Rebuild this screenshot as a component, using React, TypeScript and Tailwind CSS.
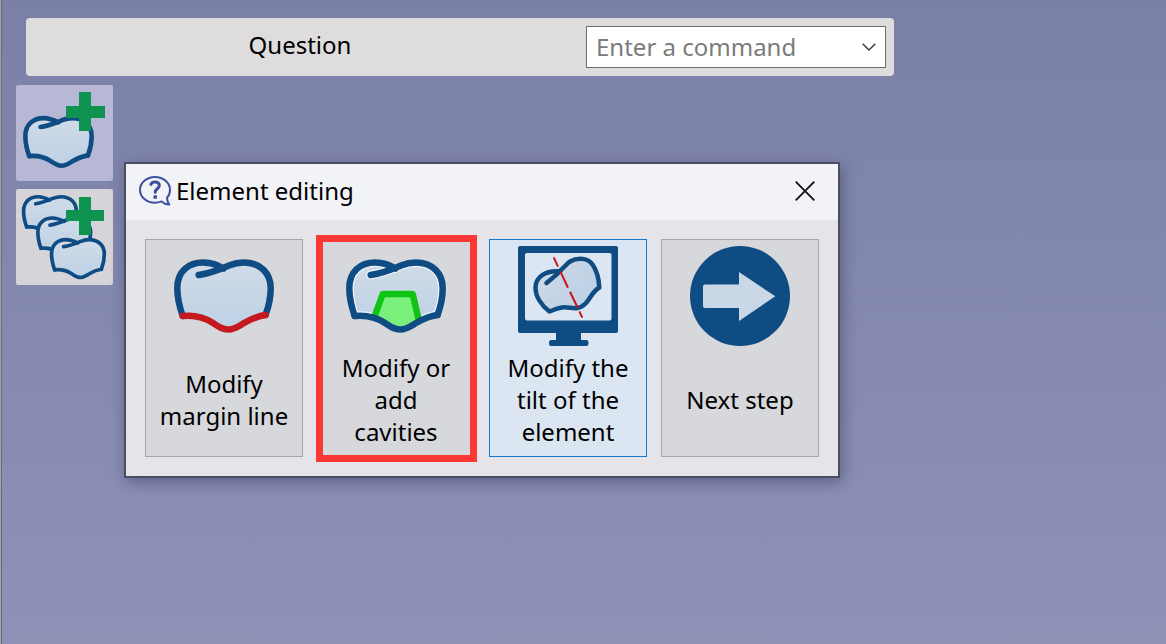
import { useId } from 'react';
import type { ReactNode } from 'react';

const CROWN_TOP =
  'M8.7 70C5.2 60 3.3 51 3.3 42C3.3 25 15 16.5 29 16.5C38 16.5 43 19 49.5 22.5M24.7 29C38 27 48 22.5 55 19.5C61 17 65 16.5 70 16.5C86 16.5 96.7 27 96.7 42C96.7 52 94.6 61 91.5 69';
const CROWN_BOTTOM =
  'M8.7 70C19 69 30 71 39 77C45 81 48 83.5 54.3 83.5C61 83.5 65 80 71 76.5C78 72.5 84 70 91.5 69';
const CROWN_BODY =
  'M8.7 70C5.2 60 3.3 51 3.3 42C3.3 25 15 16.5 29 16.5C38 16.5 43 19 49.5 22.5L55 19.5C61 17 65 16.5 70 16.5C86 16.5 96.7 27 96.7 42C96.7 52 94.6 61 91.5 69C84 70 78 72.5 71 76.5C65 80 61 83.5 54.3 83.5C48 83.5 45 81 39 77C30 71 19 69 8.7 70Z';

interface CrownProps {
  margin?: string;
  glow?: boolean;
  children?: ReactNode;
}

function Crown({ margin = '#0f4c83', glow = false, children }: CrownProps) {
  const id = useId();

  return (
    <g fill="none" strokeWidth="6.5" strokeLinecap="round" strokeLinejoin="round">
      <linearGradient id={id} x1="0" y1="0" x2="0" y2="1">
        <stop offset="0" stopColor="#d0dbe7" />
        <stop offset="1" stopColor="#bdd1e6" />
      </linearGradient>
      <clipPath id={`${id}-clip`}>
        <path d={CROWN_BODY} />
      </clipPath>
      <path d={CROWN_BODY} fill={`url(#${id})`} />
      {glow && (
        <g clipPath={`url(#${id}-clip)`} stroke="#eef3f9" strokeWidth="9">
          <path d={CROWN_TOP} />
          <path d={CROWN_BOTTOM} />
        </g>
      )}
      {children}
      <path d={CROWN_TOP} stroke="#0f4c83" />
      <path d={CROWN_BOTTOM} stroke={margin} />
    </g>
  );
}

function MarginIcon() {
  return (
    <svg viewBox="0 0 100 100" className="size-[100px]" aria-hidden="true">
      <Crown margin="#c41a1f" />
    </svg>
  );
}

function CavityIcon() {
  return (
    <svg viewBox="0 0 100 100" className="size-[100px]" aria-hidden="true">
      <Crown glow>
        <path d="M28.7 70L36.7 48H66.7L72.5 74L54 83L38 76Z" fill="#79ef7c" />
        <path d="M28.7 70L36.7 48H66.7L72.5 73" stroke="#10c413" />
      </Crown>
    </svg>
  );
}

function TiltIcon() {
  return (
    <svg viewBox="0 0 100 100" className="size-[100px]" aria-hidden="true">
      <path
        d="M2 0H98Q100 0 100 2V85Q100 87 98 87H63V94H68.5Q70.5 94 70.5 97T68.5 100H33Q31 100 31 97T33 94H38V87H2Q0 87 0 85V2Q0 0 2 0ZM9 7Q7 7 7 9V72.5Q7 74.5 9 74.5H91.5Q93.5 74.5 93.5 72.5V9Q93.5 7 91.5 7Z"
        fill="#0f4c83"
        fillRule="evenodd"
      />
      <linearGradient id="tilted" x1="0" y1="0" x2="1" y2="0.6">
        <stop offset="0" stopColor="#d0dae6" />
        <stop offset="1" stopColor="#bcd0e5" />
      </linearGradient>
      <g stroke="#0f4c83" strokeWidth="4.5" strokeLinecap="round" strokeLinejoin="round" fill="none">
        <path
          d="M31.5 65.5C23 59 17.5 50 17.5 42C17.5 31 27 24.5 41 25.3C46 22 48 18 52 15.5C60 11 70 12 74.5 18.5C79 25 81 33 81.3 41.5C74 46 72 53 67.5 57.5C60 65 54 61.5 47 61.3C42 61 37 63.5 31.5 65.5Z"
          fill="url(#tilted)"
        />
        <path d="M28.5 37C34 32.5 39 28.5 42.5 25" />
      </g>
      <path
        d="M35.7 11.3L40 20.7M42.3 25.3L50 41.7M52 45.7L59.7 61.7M61.3 65.3L64.3 71.7"
        stroke="#c9151b"
        strokeWidth="2"
        fill="none"
      />
    </svg>
  );
}

function NextIcon() {
  return (
    <svg viewBox="0 0 100 100" className="size-[100px]" aria-hidden="true">
      <circle cx="50" cy="50" r="50" fill="#0f4c83" />
      <path d="M15 38.5H49V26L85.3 50.3L49 75V62H15Q13 62 13 60V40.5Q13 38.5 15 38.5Z" fill="#cad7e7" />
    </svg>
  );
}

function AddCrownIcon() {
  return (
    <svg viewBox="0 0 97 96" className="w-full" aria-hidden="true">
      <g transform="translate(7 21.4) scale(.71)">
        <Crown />
      </g>
      <path d="M63 7H75V21H89V33H75V46H63V33H50V21H63Z" fill="#0f9350" />
    </svg>
  );
}

function AddBridgeIcon() {
  return (
    <svg viewBox="0 0 97 96" className="w-full" aria-hidden="true">
      <g transform="translate(5.7 -1.6) scale(.565)">
        <Crown />
      </g>
      <g transform="translate(20 19.7) scale(.565)">
        <Crown />
      </g>
      <path d="M63 8H75V21H88V32H75V46H63V32H50V21H63Z" fill="#0f9350" />
      <g transform="translate(33.7 41.3) scale(.565)">
        <Crown />
      </g>
    </svg>
  );
}

function HelpIcon() {
  return (
    <svg viewBox="0 0 32 30" className="h-[30px] w-8" fill="none" stroke="#3c4fa0" strokeLinecap="round" strokeLinejoin="round" aria-hidden="true">
      <path
        d="M22.5 25.4C20.5 26.2 18.3 26.7 16 26.7C7.7 26.7 1 21 1 13.9S7.7 1 16 1S31 6.8 31 13.9C31 17 29.9 19.6 28 21.7C28 24.5 28.8 26.7 30.3 28.6C27.2 28.6 24.7 27.3 22.5 25.4Z"
        strokeWidth="2"
      />
      <path d="M11.9 8.4C13.2 5 20.3 5 20.3 9.6C20.3 12.8 16.2 12.8 16.2 16.2" strokeWidth="3" />
      <circle cx="16.2" cy="20.9" r="2" fill="#3c4fa0" stroke="none" />
    </svg>
  );
}

const tools = [
  { label: 'Add element', icon: <AddCrownIcon />, style: 'bg-[#b7b8d6]' },
  { label: 'Add several elements', icon: <AddBridgeIcon />, style: 'bg-[#d6d4d8]' },
];

const actions = [
  { label: 'Modify margin line', icon: <MarginIcon /> },
  { label: 'Modify or add cavities', icon: <CavityIcon />, marked: true },
  { label: 'Modify the tilt of the element', icon: <TiltIcon />, active: true },
  { label: 'Next step', icon: <NextIcon /> },
];

export default function App() {
  return (
    <div className="min-h-screen border-l border-[#a3a2a4] bg-linear-to-b from-[#7a80a8] to-[#8f92b7] pl-px font-['Noto_Sans','Open_Sans',sans-serif] text-2xl text-black shadow-[inset_1px_0_#6a6b78]">
      <header className="pl-6 pt-[18px]">
        <div className="flex h-[58px] w-full max-w-[868px] items-center justify-between rounded-sm bg-[#dedcdd] pr-2">
          <h1 className="flex-1 pb-1 pr-3 text-center">Question</h1>
          <div className="relative w-[300px]">
            <select
              aria-label="Command"
              className="h-[42px] w-full appearance-none border border-[#707070] bg-white pl-[9px] pr-10 text-[#7b7b7b]"
            >
              <option>Enter a command</option>
            </select>
            <svg viewBox="0 0 14 8" className="pointer-events-none absolute right-[10px] top-[17px] h-2 w-[14px]" fill="none" stroke="#333" strokeWidth="1.3" aria-hidden="true">
              <path d="M.7 .7L7 7L13.3 .7" />
            </svg>
          </div>
        </div>
      </header>

      <main className="flex items-start gap-[11px] pb-8 pl-[14px] pt-[9px]">
        <nav className="flex shrink-0 flex-col gap-2">
          {tools.map(tool => (
            <button key={tool.label} aria-label={tool.label} className={`h-24 w-[97px] rounded-xs ${tool.style}`}>
              {tool.icon}
            </button>
          ))}
        </nav>

        <section
          role="dialog"
          aria-labelledby="dialog-title"
          className="mt-[77px] w-full max-w-[716px] border-2 border-[#4c4e60] bg-[#e5e5e9] shadow-[2px_4px_14px_rgba(40,42,80,0.45)]"
        >
          <div className="flex h-14 items-center gap-[5px] bg-[#f2f3f7] pb-0.5 pl-[13px] pr-[23px]">
            <HelpIcon />
            <h2 id="dialog-title" className="flex-1">Element editing</h2>
            <button aria-label="Close">
              <svg viewBox="0 0 20 20" className="size-5" stroke="#111" strokeWidth="1.8" aria-hidden="true">
                <path d="M.7 .7L19.3 19.3M19.3 .7L.7 19.3" />
              </svg>
            </button>
          </div>

          <div className="grid grid-cols-4 gap-[14px] px-[19px] py-[19px]">
            {actions.map(action => (
              <div key={action.label} className="relative">
                <button
                  className={`flex h-[218px] w-full flex-col items-center border px-[13px] pb-0.5 pt-[6px] leading-8 ${
                    action.active ? 'border-[#0f7bd3] bg-[#dbe6f2]' : 'border-[#a7a8ac] bg-[#d7d8dc]'
                  }`}
                >
                  {action.icon}
                  <span className="flex flex-1 items-center">{action.label}</span>
                </button>
                {action.marked && (
                  <div className="pointer-events-none absolute -bottom-[5px] -left-px -right-[2px] -top-1 border-[7px] border-[#fc3837]" />
                )}
              </div>
            ))}
          </div>
        </section>
      </main>
    </div>
  );
}
